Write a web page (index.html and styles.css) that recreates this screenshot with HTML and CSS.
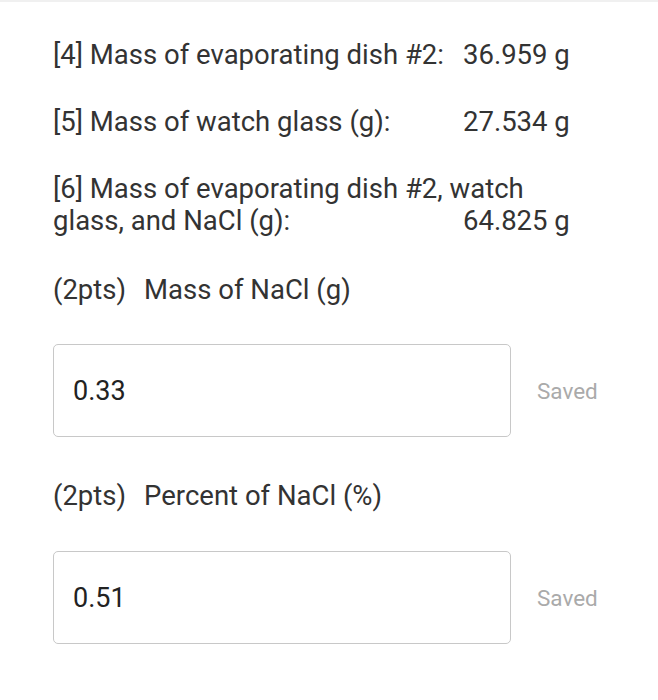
FILE: index.html
```html
<!DOCTYPE html>
<html>
<head>
<meta charset="utf-8">
<link rel="stylesheet" href="styles.css">
</head>
<body>
<div class="page">
  <div class="row"><span class="label">[4] Mass of evaporating dish #2:</span><span class="value">36.959 g</span></div>
  <div class="row"><span class="label">[5] Mass of watch glass (g):</span><span class="value">27.534 g</span></div>
  <div class="row multi">
    <div class="full">[6] Mass of evaporating dish #2, watch</div>
    <div class="line"><span class="label">glass, and NaCl (g):</span><span class="value">64.825 g</span></div>
  </div>
  <div class="question"><span class="pts">(2pts)</span><span>Mass of NaCl (g)</span></div>
  <div class="answer">
    <div class="box">0.33</div>
    <span class="saved">Saved</span>
  </div>
  <div class="question q2"><span class="pts">(2pts)</span><span>Percent of NaCl (%)</span></div>
  <div class="answer">
    <div class="box">0.51</div>
    <span class="saved">Saved</span>
  </div>
</div>
</body>
</html>
```
FILE: styles.css
```css
html, body {
  margin: 0;
  padding: 0;
  background: #fff;
}
body {
  font-family: Roboto, "Liberation Sans", sans-serif;
  color: #333;
  border-top: 2px solid #f0f0f0;
}
.page {
  padding: 37px 0 0 53px;
  font-size: 27.5px;
  line-height: 32px;
}
.row {
  display: grid;
  grid-template-columns: 410px auto;
  margin-bottom: 35px;
}
.row.multi {
  display: block;
  margin-bottom: 37px;
}
.line {
  display: grid;
  grid-template-columns: 410px auto;
}
.question {
  display: flex;
  gap: 18px;
  margin-bottom: 38px;
}
.q2 {
  margin-top: 43px;
  margin-bottom: 39px;
}
.answer {
  display: flex;
  align-items: center;
}
.box {
  box-sizing: border-box;
  width: 458px;
  height: 93px;
  border: 1.5px solid #c8c8c8;
  border-radius: 5px;
  padding-left: 19px;
  display: flex;
  align-items: center;
  color: #222;
  font-size: 27px;
}
.saved {
  margin-left: 26px;
  font-size: 22.5px;
  color: #aaa;
}
```
